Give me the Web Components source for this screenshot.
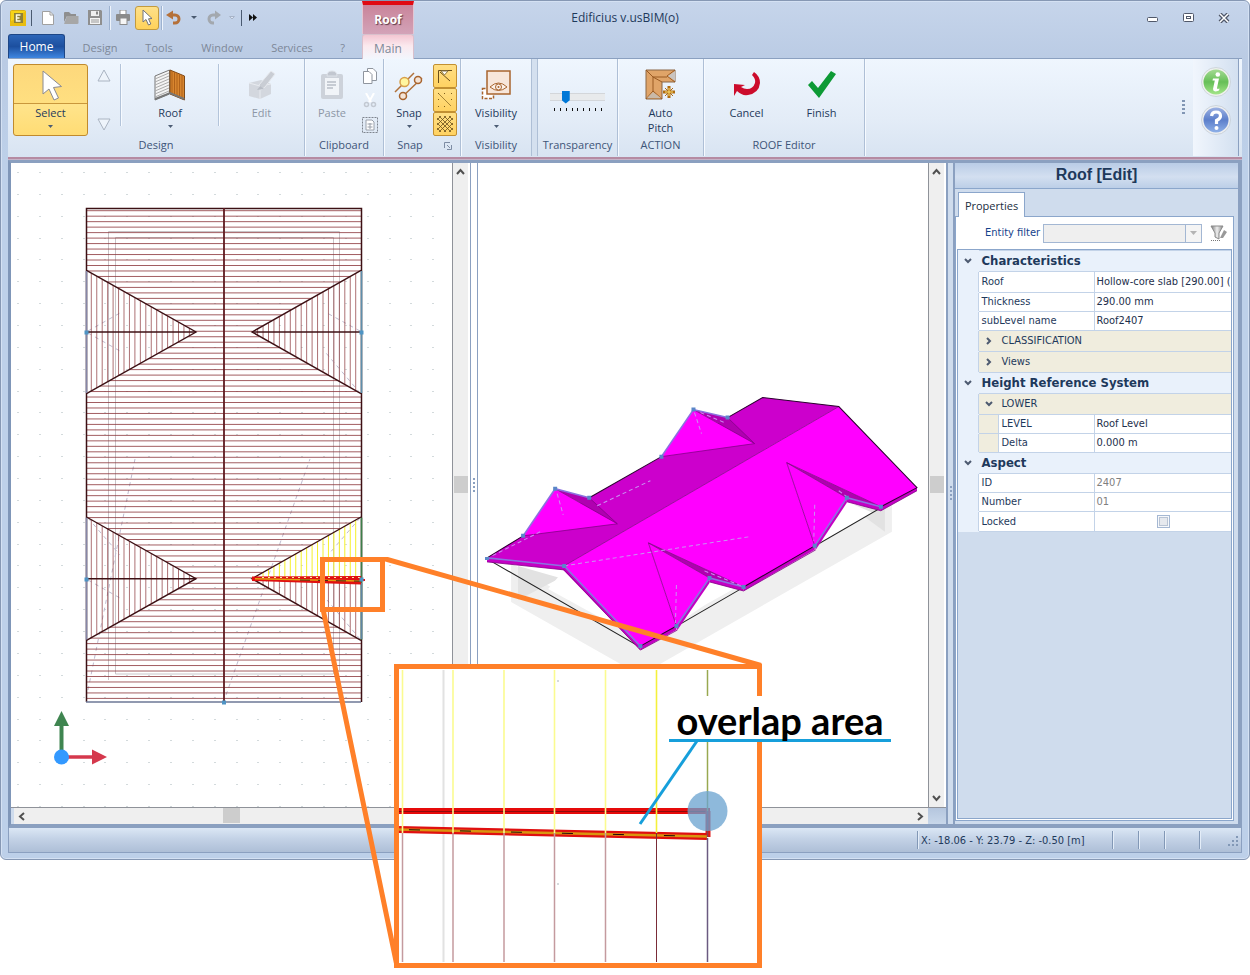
<!DOCTYPE html>
<html lang="en">
<head>
<meta charset="utf-8">
<title>Edificius v.usBIM(o)</title>
<style>
html,body{margin:0;background:#fff}
body{font:11px/16px "Open Sans","Noto Sans",sans-serif;color:#1e395b}
</style>
</head>
<body>
<app-window>
  <title-bar slot="title">Edificius v.usBIM(o)</title-bar>
  <tab-strip slot="tabs"></tab-strip>
  <ribbon-bar slot="ribbon"></ribbon-bar>
  <view-area slot="views"></view-area>
  <property-panel slot="panel">Roof [Edit]</property-panel>
  <status-bar slot="status">X: -18.06 - Y: 23.79 - Z: -0.50 [m]</status-bar>
  <detail-callout slot="overlay">overlap area</detail-callout>
</app-window>
<script>
const base = '<style>:host,*{box-sizing:border-box}button{font:inherit;color:inherit;background:none;border:0;padding:0;margin:0}svg{display:block}</style>';
function define(name, html, setup) {
  const t = document.createElement('template');
  t.innerHTML = base + html;
  customElements.define(name, class extends HTMLElement {
    constructor() {
      super();
      this.attachShadow({mode: 'open'}).append(t.content.cloneNode(true));
      if (setup) setup(this.shadowRoot, this);
    }
  });
}

/* ---------- window frame ---------- */
define('app-window', `
<style>
:host{display:block;position:relative;padding-bottom:115px}
.frame{border:1px solid #8698b4;border-radius:6px;background:linear-gradient(#c6d5eb,#bacbe4 60px,#bdd0e9 160px,#bdd0e9);padding:0 7px 6px;box-shadow:inset 0 0 0 1px #d4e1f3}
.work{display:flex;border:solid #8ba0c0;border-width:3px 3px 4px;border-left-color:#7f96b8;background:#cfdced}
.left{flex:1;min-width:0}
.right{flex:none;width:293px}
</style>
<div class="frame">
  <slot name="title"></slot><slot name="tabs"></slot><slot name="ribbon"></slot>
  <div class="work"><div class="left"><slot name="views"></slot></div><div class="right"><slot name="panel"></slot></div></div>
  <slot name="status"></slot>
</div>
<slot name="overlay"></slot>`);

/* ---------- title bar ---------- */
define('title-bar', `
<style>
:host{display:grid;grid-template-columns:1fr auto 1fr;height:33px}
.left{display:flex}
.qat{flex:none;width:354px;display:flex;align-items:center}
.qat button{height:24px;flex:none;display:flex;align-items:center;justify-content:center}
.on{background:linear-gradient(#fde08a,#ffd25a);border:1px solid #c29a3e;border-radius:3px}
.bar{flex:none;width:1px;height:16px;background:#4a5a70}
.sep{flex:none;width:2px;height:24px;background:linear-gradient(90deg,#9db2d0 50%,#eef4fc 50%)}
.ctx{flex:none;width:52px;border-top:4px solid #e00a12;background:linear-gradient(#c9849a,#d3a3b8);border-left:1px solid #e3c6d3;border-right:1px solid #e3c6d3;color:#fff;font-weight:700;font-size:12px;display:flex;align-items:center;justify-content:center;text-shadow:1px 1px 1px #5d3a48}
.title{align-self:center;font-size:12px}
.win{display:flex;justify-content:flex-end;align-items:center}
.win button{width:36px;height:20px;display:flex;align-items:center;justify-content:center}
</style>
<div class="left">
 <div class="qat">
  <button style="width:20px" aria-label="Application"><svg width="16" height="16"><rect x=".5" y=".5" width="15" height="15" rx="1" fill="#f7d417" stroke="#d8b01a"/><path d="M0 16V12L16 1V16Z" fill="#e9bd10"/><rect x="4" y="3" width="9" height="10" fill="#8d8038"/><path d="M10.500 5H6.500V11H10.500M6.500 8H9.500" stroke="#fffbe0" stroke-width="1.500" fill="none"/></svg></button>
  <span class="bar" style="margin:0 5px 0 3px"></span>
  <button style="width:21px" aria-label="New"><svg width="12" height="14"><path d="M.5.5H8L11.500 4V13.500H.5Z" fill="#fff" stroke="#a0a0a0"/><path d="M8 .5V4H11.500" fill="none" stroke="#a0a0a0"/></svg></button>
  <button style="width:25px" aria-label="Open"><svg width="16" height="14"><path d="M1 2Q1 1 2 1H6L8 3H13V5H4L1 11Z" fill="#8e8e8e"/><path d="M4 5H15.500V12Q15.500 13 14 13H1Z" fill="#a7a7a7"/></svg></button>
  <button style="width:24px" aria-label="Save"><svg width="14" height="15"><path d="M0 0H13L14 1V15H0Z" fill="#8f8f8f"/><rect x="3" y="1" width="8" height="5" fill="#f0f0f0"/><rect x="8" y="1.500" width="2" height="3" fill="#888"/><rect x="2" y="8" width="10" height="6" fill="#f4f4f4"/><path d="M3 10H11M3 12H11" stroke="#999"/></svg></button>
  <span class="sep" style="margin-left:2px"></span>
  <button style="width:24px" aria-label="Print"><svg width="14" height="15"><rect x="4" y="0" width="6" height="5" fill="#fff" stroke="#8b8b8b"/><rect y="4" width="14" height="7" rx="1" fill="#8b8b8b"/><rect x="4" y="8" width="7" height="6.500" fill="#f6f6f6" stroke="#8b8b8b"/></svg></button>
  <button class="on" style="width:24px" aria-label="Select"><svg width="12" height="17"><path d="M2 1V13L5 10.500L7.500 16L9.800 15L7.500 9.800L11 9.500Z" fill="#fff" stroke="#70737c"/></svg></button>
  <span class="sep" style="margin:0 2px"></span>
  <button style="width:18px" aria-label="Undo"><svg width="16" height="15"><path d="M3 5H9A4 4 0 0 1 9 13H7" fill="none" stroke="#b5713a" stroke-width="3"/><path d="M0 5L7 .5V9.500Z" fill="#b5713a"/></svg></button>
  <button style="width:22px" aria-label="Undo list"><svg width="6" height="3"><path d="M0 0H6L3 3Z" fill="#4a5a70"/></svg></button>
  <button style="width:18px" aria-label="Redo"><svg width="16" height="15"><path d="M12 5H7A4 4 0 0 0 7 13H8" fill="none" stroke="#a3a8ae" stroke-width="3"/><path d="M15 5L9 .5V9.500Z" fill="#a3a8ae"/></svg></button>
  <button style="width:18px" aria-label="Redo list"><svg width="6" height="4"><path d="M.5 .5H5.500L3 3Z" fill="#dbe5f3" stroke="#a8b4c8"/></svg></button>
  <span class="bar"></span>
  <button style="width:22px" aria-label="More"><svg width="8" height="7"><path d="M0 0L4 3.500L0 7ZM4 0L8 3.500L4 7Z" fill="#111"/></svg></button>
 </div>
 <div class="ctx">Roof</div>
</div>
<div class="title"><slot></slot></div>
<div class="win">
 <button aria-label="Minimize"><svg width="11" height="8"><rect x=".5" y="3.500" width="10" height="4" rx="1" fill="#fff" stroke="#50586a"/></svg></button>
 <button aria-label="Maximize"><svg width="11" height="9"><rect x=".5" y=".5" width="10" height="8" rx="1" fill="#fff" stroke="#50586a"/><rect x="3.500" y="3.500" width="4" height="2" fill="#fff" stroke="#50586a"/></svg></button>
 <button aria-label="Close"><svg width="12" height="10"><path d="M2 1L10 9M10 1L2 9" stroke="#50586a" stroke-width="4"/><path d="M2 1L10 9M10 1L2 9" stroke="#fff" stroke-width="1.500"/></svg></button>
</div>`);

/* ---------- tabs ---------- */
define('tab-strip', `
<style>
:host{display:flex;height:25px;border-bottom:1px solid #8ba0c0;color:#7d8898}
button{flex:none;height:24px;padding-top:3px}
.home{width:57px;background:linear-gradient(#2d66b8,#1c4f9f 50%,#3f86e0);color:#fff;border:1px solid #1d4686;border-bottom:0;border-radius:3px 3px 0 0;padding-top:0;font-size:12px}
.main{width:52px;height:25px;background:linear-gradient(#f3c6d2,#fbe9ee 45%,#f2f6fd);border:1px solid #d9c0cc;border-bottom:0;border-radius:3px 3px 0 0;font-size:12px}
</style>
<button class="home">Home</button><button style="width:70px">Design</button><button style="width:48px">Tools</button><button style="width:78px">Window</button><button style="width:62px">Services</button><button style="width:39px">?</button><button class="main">Main</button>`);

/* ---------- ribbon parts ---------- */
define('ribbon-group', `
<style>
:host{display:flex;flex-direction:column;flex:none;border-right:1px solid #aebfd6;box-shadow:1px 0 #f6faff}
.body{flex:1;display:flex;position:relative}
.cap{height:20px;line-height:18px;text-align:center;color:#3e5578;font-size:11px;white-space:nowrap;position:relative}
.short{padding-right:24px}
svg{position:absolute;right:8px;top:6px}
</style>
<div class="body"><slot></slot></div><div class="cap"><span></span></div>`, (r, el) => {
  r.querySelector('span').textContent = el.getAttribute('label');
  if (el.hasAttribute('launcher')) {
    r.querySelector('.cap').classList.add('short');
    r.querySelector('.cap').insertAdjacentHTML('beforeend',
     '<svg width="8" height="8"><path d="M.5 6V.5H6M3 3L6 6M7.500 3V7.500H3" fill="none" stroke="#7d8ca3"/></svg>');
  }
});
define('ribbon-button', `
<style>
:host{display:block;flex:none}
button{width:100%;height:72px;margin-top:5px;display:flex;flex-direction:column;align-items:center;border:1px solid transparent}
.pic{height:39px;width:100%;display:flex;align-items:center;justify-content:center}
.txt{line-height:15px;padding-top:1px}
:host([on]) button{border-color:#c08a2e;border-radius:3px;background:linear-gradient(#fdd87c,#ffdf80 38px,#c9973c 38px,#c9973c 39px,#ffe48c 39px,#ffdc74)}
:host([off]){color:#8d97a6}
.arr{display:none;margin-top:5px}
:host([menu]) .arr{display:block}
</style>
<button><span class="pic"><slot name="icon"></slot></span><span class="txt"><slot></slot></span><svg class="arr" width="5" height="3"><path d="M0 0H5L2.500 3Z" fill="#4c5c74"/></svg></button>`,
 (r, el) => { if (el.hasAttribute('off')) r.querySelector('button').disabled = true; r.querySelector('button').style.color = 'inherit'; });

define('ribbon-bar', `
<style>
:host{display:flex;height:101px;background:linear-gradient(#eff6fe,#e3ecf7 60%,#d7e3f1);box-shadow:inset 0 -1px #c6b4c8,inset 0 -3px #b58ba2;padding-bottom:4px}
.sep{flex:none;width:2px;height:62px;margin-top:5px;background:linear-gradient(90deg,#b3c4da 50%,#f6faff 50%)}
.spin{flex:none;width:32px;display:flex;flex-direction:column;justify-content:space-between;align-items:center;height:62px;margin-top:10px}
.mini{flex:none;width:22px;display:flex;flex-direction:column;gap:9px;padding-top:9px;align-items:center}
.tog{flex:none;width:24px;padding-top:5px}
.tog button{width:24px;height:24px;border:1px solid #c29032;border-radius:2px;background:linear-gradient(#ffdf85,#ffd262);display:flex;align-items:center;justify-content:center}
.gap{flex:none;width:6px;border-right:1px solid #aebfd6;background:#d4e0ef}
.slide{display:flex;flex-direction:column;align-items:center;padding-top:31px;width:100%}
input{appearance:none;-webkit-appearance:none;width:55px;height:14px;margin:0;background:linear-gradient(transparent 3px,#d3d6da 3px,#d3d6da 4px,#e8eaec 4px,#e8eaec 10px,#d3d6da 10px,#d3d6da 11px,transparent 11px)}
input::-webkit-slider-thumb{-webkit-appearance:none;width:8px;height:13px;background:#0078d7;clip-path:polygon(0 0,100% 0,100% 75%,50% 100%,0 75%)}
.slide svg{margin-top:4px}
.fill{flex:1}
.dots{align-self:center;width:3px;height:15px;margin-right:8px;background:repeating-linear-gradient(#8196b4 0 2px,transparent 2px 4px)}
.help{flex:none;width:46px;margin-right:3px;border-right:1px solid #8ba0c0;background:linear-gradient(90deg,#f1f6fd,#d3e0f0);display:flex;flex-direction:column;align-items:center;gap:8px;padding-top:8px}
.help button{height:30px}
</style>
<ribbon-group label="Design" style="width:297px">
  <ribbon-button on menu style="width:75px;margin-left:5px"><svg slot="icon" width="24" height="32"><path d="M4 2V25L10 20L15 31L19.500 29L14.500 18.500L22.500 17.500Z" fill="#fff" stroke="#8a8a92"/></svg>Select</ribbon-button>
  <div class="spin"><svg width="14" height="13"><path d="M7 1L13 12H1Z" fill="#eef4fb" stroke="#aab4c2"/></svg><svg width="14" height="13"><path d="M7 12L13 1H1Z" fill="#eef4fb" stroke="#aab4c2"/></svg></div>
  <span class="sep"></span>
  <ribbon-button menu style="width:96px"><svg slot="icon" width="32" height="32"><path d="M1 7L15.500 1V25L1 31Z" fill="#f4f4f4" stroke="#777"/><path d="M1 10L15 4M1 13L15 7M1 16L15 10M1 19L15 13M1 22L15 16M1 25L15 19M1 28L15 22" stroke="#aaa"/><path d="M16 1L30.500 7V31L16 25Z" fill="#d8862f" stroke="#7f4a18"/><path d="M18 2V25M20.500 3V26M23 4V27M25.500 5V28M28 6V29" stroke="#b0621a"/><path d="M1 31V29L16 23L30.500 29V31L16 25Z" fill="#777"/></svg>Roof</ribbon-button>
  <span class="sep"></span>
  <ribbon-button off style="width:83px"><svg slot="icon" width="30" height="32"><path d="M2 14L14 11L24 15V25L13 30L2 27Z" fill="#d3d7de"/><path d="M2 14L13 17L24 15M13 17V30" stroke="#e8ebf0" fill="none"/><path d="M14 21L12 16L24 2L28 5L18 18Z" fill="#c9cdd4" stroke="#e6e9ee"/><path d="M10 21L13 17L17 20Z" fill="#b9bec6"/></svg>Edit</ribbon-button>
</ribbon-group>
<ribbon-group label="Clipboard" style="width:79px">
  <ribbon-button off style="width:54px"><svg slot="icon" width="24" height="30"><rect x="1" y="4" width="22" height="25" rx="2" fill="#cdd2da"/><path d="M7 6Q7 1 12 1Q17 1 17 6Z" fill="#c2c7d0" stroke="#dfe3ea"/><rect x="5" y="8" width="14" height="17" fill="#f1f4f8"/><path d="M7 12H16M7 15H16M7 18H13" stroke="#c6cbd3" stroke-width="2"/></svg>Paste</ribbon-button>
  <div class="mini">
   <button aria-label="Copy"><svg width="14" height="16"><path d="M4.500.5H10L13.500 4V12.500H4.500Z" fill="#fff" stroke="#8f959e"/><path d="M.5 3.500H6L9 6.500V15.500H.5Z" fill="#fff" stroke="#8f959e"/></svg></button>
   <button aria-label="Cut"><svg width="14" height="15"><path d="M3 0L8 9M11 0L6 9" stroke="#fff" stroke-width="2"/><circle cx="3.500" cy="11.500" r="2" fill="none" stroke="#c3c9d2" stroke-width="1.500"/><circle cx="10.500" cy="11.500" r="2" fill="none" stroke="#c3c9d2" stroke-width="1.500"/></svg></button>
   <button aria-label="Copy area"><svg width="16" height="16"><rect x=".5" y=".5" width="15" height="15" fill="none" stroke="#7f858e" stroke-dasharray="2 1"/><path d="M4 3H10L12 5V13H4Z" fill="#fff" stroke="#9aa0aa"/><path d="M5.500 7H10.500M5.500 10H10.500M8 6V12" stroke="#9aa0aa"/></svg></button>
  </div>
</ribbon-group>
<ribbon-group label="Snap" launcher style="width:77px">
  <ribbon-button menu style="width:48px;margin-left:1px"><svg slot="icon" width="30" height="32" fill="none"><path d="M1 23L20 4M8 28L28 9" stroke="#b0713a" stroke-width="1.500"/><circle cx="10.500" cy="13" r="4.500" fill="#fff6a0" stroke="#d8a04a" stroke-width="1.500"/><circle cx="24" cy="11" r="3.500" fill="#f5e4d6" stroke="#a8642e" stroke-width="1.500"/><circle cx="9" cy="27" r="3.500" fill="#f5e4d6" stroke="#a8642e" stroke-width="1.500"/></svg>Snap</ribbon-button>
  <div class="tog">
   <button aria-label="Snap angle"><svg width="16" height="16"><path d="M1.500 15V2.500H15M3 4L13 13" fill="none" stroke="#6b4f1a"/><path d="M4 3H11L7.500 7Z" fill="#fff" stroke="#8d7a48"/></svg></button>
   <button aria-label="Snap point"><svg width="16" height="16"><path d="M2 2L14 14" stroke="#80601c" stroke-width=".7"/><g fill="#80601c"><rect x="1" y="1" width="1" height="1"/><rect x="7" y="1" width="1" height="1"/><rect x="14" y="1" width="1" height="1"/><rect x="1" y="7" width="1" height="1"/><rect x="14" y="7" width="1" height="1"/><rect x="1" y="14" width="1" height="1"/><rect x="7" y="14" width="1" height="1"/></g></svg></button>
   <button aria-label="Snap grid"><svg width="16" height="16"><path d="M0 4L4 0M0 9L9 0M0 14L14 0M2 16L16 2M7 16L16 7M12 16L16 12M12 0L16 4M7 0L16 9M2 0L16 14M0 2L14 16M0 7L9 16M0 12L4 16" stroke="#6b4f1a" stroke-width=".8"/></svg></button>
  </div>
</ribbon-group>
<ribbon-group label="Visibility" style="width:71px">
  <ribbon-button menu style="width:70px"><svg slot="icon" width="30" height="30"><rect x="1.500" y="18.500" width="11" height="10" fill="#fff" stroke="#a8642e" stroke-dasharray="3 1.500" stroke-width="1.500"/><rect x="6" y="1" width="23" height="23" fill="#f7e6da" stroke="#a8642e" stroke-width="1.500"/><path d="M9 17Q17.500 9 26 17Q17.500 24 9 17Z" fill="#fbf0e8" stroke="#a8642e"/><circle cx="17.500" cy="17" r="3" fill="none" stroke="#a8642e"/><circle cx="17.500" cy="17" r="1" fill="#a8642e"/></svg>Visibility</ribbon-button>
</ribbon-group>
<div class="gap"></div>
<ribbon-group label="Transparency" style="width:80px">
  <div class="slide"><input type="range" min="0" max="8" value="2" aria-label="Transparency"><svg width="48" height="4"><path d="M.5 0V3M6.500 0V3M12.500 0V3M18.500 0V3M23.500 0V3M29.500 0V3M35.500 0V3M41.500 0V3M47.500 0V3" stroke="#111"/></svg></div>
</ribbon-group>
<ribbon-group label="ACTION" style="width:86px">
  <ribbon-button style="width:85px"><svg slot="icon" width="32" height="32"><path d="M1 1H30V13H17V30H1Z" fill="#e0a468" stroke="#8a6644"/><path d="M1 1L8 8M30 1L22 7L30 13M8 8H22M8 8V22L1 30M8 22L17 30M8 8L17 13" fill="none" stroke="#9a5a22"/><path d="M30 2V12L23 7Z" fill="#c9c4c0"/><path d="M2 29L8 23L16 29Z" fill="#c9b9a8"/><path d="M24 17V29M18 23H30" stroke="#b06c10" stroke-width="3"/><path d="M20 19L28 27M28 19L20 27" stroke="#b06c10"/><path d="M24 19V27M20 23H28" stroke="#ffe070"/></svg>Auto<br>Pitch</ribbon-button>
</ribbon-group>
<ribbon-group label="ROOF Editor" style="width:161px">
  <ribbon-button style="width:75px;margin-left:5px"><svg slot="icon" width="30" height="27"><path d="M20 4Q24 8 23 12Q21 18 15 18Q12 18 9 16L13 14L2 13V25L5 20Q10 25 16 24Q27 22 28 12Q28 5 22 1Z" fill="#cc0c2c"/></svg>Cancel</ribbon-button>
  <ribbon-button style="width:75px"><svg slot="icon" width="30" height="30"><path d="M1 15L5 11L11 18L24 1L29 4L12 28Z" fill="#0d9a35"/></svg>Finish</ribbon-button>
</ribbon-group>
<div class="fill"></div>
<div class="dots"></div>
<div class="help">
 <button aria-label="Information"><svg width="30" height="30"><defs><linearGradient id="g" x2="0" y2="1"><stop stop-color="#a9dd98"/><stop offset=".5" stop-color="#66bf57"/><stop offset="1" stop-color="#a8e88c"/></linearGradient></defs><circle cx="15" cy="15" r="13.500" fill="url(#g)" stroke="#eef0ee" stroke-width="2"/><circle cx="15" cy="15" r="14.500" fill="none" stroke="#bcc6cc" stroke-width=".6"/><circle cx="16.800" cy="7.500" r="2.300" fill="#fff"/><path d="M12 11.500H18L16 21Q16 22.500 18.500 21.500L18 23.500Q12 26 12 22L13.800 13.500H11.500Z" fill="#fff"/></svg></button>
 <button aria-label="Help"><svg width="30" height="30"><defs><linearGradient id="b" x2="0" y2="1"><stop stop-color="#a0b4e4"/><stop offset=".5" stop-color="#5c7fcb"/><stop offset="1" stop-color="#92b4ea"/></linearGradient></defs><circle cx="15" cy="15" r="13.500" fill="url(#b)" stroke="#eceef0" stroke-width="2"/><circle cx="15" cy="15" r="14.500" fill="none" stroke="#b8c2cc" stroke-width=".6"/><path d="M10.500 11Q11 7 15 7Q19.500 7 19.500 11Q19.500 13.500 15.500 15.500V19" fill="none" stroke="#fff" stroke-width="3.200"/><circle cx="15.500" cy="23" r="2" fill="#fff"/></svg></button>
</div>`);

/* ---------- plan drawing ---------- */
define('plan-view', `
<style>:host{display:block;background:#fff;overflow:hidden}svg{width:100%;height:100%}</style>
<svg viewBox="11 163 441 644" preserveAspectRatio="xMinYMin slice" role="img" aria-label="Roof plan"></svg>`, r => {
  const L = (x1,y1,x2,y2,c,w=1,x='') => `<line x1="${x1.toFixed(2)}" y1="${y1.toFixed(2)}" x2="${x2.toFixed(2)}" y2="${y2.toFixed(2)}" stroke="${c}" stroke-width="${w}" ${x}/>`;
  let s = '<g fill="#d3dadc">';
  for (let y = 172; y < 806; y += 21.86) for (let x = 18; x < 440; x += 21.86) s += `<rect x="${Math.round(x)-1}" y="${Math.round(y)}" width="2" height="1"/>`;
  s += '</g>';
  const ghost = '#c9c4c8';
  s += `<path d="M108.500 680V231.500H339.500V670M115.500 674V237.500H333.500V674Z" fill="none" stroke="${ghost}"/>`;
  const d = 'stroke-dasharray="4 4"', lil = '#c0bcd0';
  s += L(88,690,135,459,lil,1,d)+L(226,695,310,459,lil,1,d);
  for (const [a,b,c,e] of [[88,331,120,313],[88,333,120,351],[360,331,327,313],[360,393,326,353],[88,518,120,555],[88,580,120,598],[360,518,328,555],[360,639,327,600]]) s += L(a,b,c,e,lil,1,d);
  const red = '#8a3438';
  for (let y = 210.7; y < 702; y += 5.48) {
    let cut = 0;
    for (const m of [332, 578.7]) { const k = Math.abs(y - m); if (k < 61.7) cut = 110 * (1 - k / 61.7); }
    s += L(86 + cut, y, 361 - cut, y, red, .8);
  }
  for (const m of [332, 578.7]) for (let i = 5.3; i < 108; i += 5.45) {
    const h = 61.7 * (1 - i / 110);
    s += L(86+i, m-h, 86+i, m+h, red, .7);
    if (m < 400) s += L(361-i, m-h, 361-i, m+h, red, .7);
    else s += L(361-i, m-h, 361-i, m, '#f5f02a', 1) + L(361-i, m, 361-i, m+h, red, .7);
  }
  const dk = '#3c1014';
  s += `<path d="M86.500 702V208.500H361.500V702" fill="none" stroke="${dk}" stroke-width="1.500"/>` + L(224,208,224,702,'#5e1a20',1.8);
  s += L(86,702,361,702,'#6c7796',1.5);
  for (const m of [332, 578.7]) {
    s += `<path d="M86.500 ${m-61.7}L196 ${m}L86.500 ${m+61.7}M361 ${m-61.7}L252 ${m}L361 ${m+61.7}" fill="none" stroke="${dk}" stroke-width="1.400"/>`;
    s += L(86,m,196,m,dk,1.5) + L(86.5,m-61,86.5,m+61,'#8587a8',1.6) + L(361.5,m-61,361.5,m+61,m>400?'#3d7f4a':'#5f8fac',1.6);
    if (m < 400) s += L(252,m,361,m,dk,1.5);
  }
  s += L(361.5,583,361.5,639,'#5f86a4',1.6);
  s += `<path d="M252 576.500L361 576V584.500L252 581Z" fill="#e01010"/><path d="M262 577.500H361" stroke="#ffe9a0" stroke-dasharray="2 4"/>` + L(255,578.8,361,581,'#e0a010',1.6) + L(300,580,361,581.2,'#201010',.8,'stroke-dasharray="10 8"') + L(361,580,365,580,'#e01010',2);
  for (const [x,y] of [[86,332],[361,332],[86,579],[361,579],[223.5,702]]) s += `<rect x="${x-1.5}" y="${y-1.5}" width="4" height="4" fill="#4f94c4"/>`;
  s += '<path d="M61.500 757V724" stroke="#3f8550" stroke-width="4"/><path d="M61.500 711L69 726H54Z" fill="#3f8550"/><path d="M61 757H93" stroke="#d5384c" stroke-width="3.500"/><path d="M107 757L92 749.500V764.500Z" fill="#d5384c"/><circle cx="61.500" cy="757" r="7.500" fill="#3399ff"/>';
  r.querySelector('svg').innerHTML = s;
});

/* ---------- 3D drawing ---------- */
define('model-view', `
<style>:host{display:block;background:#fff;overflow:hidden}svg{width:100%;height:100%}</style>
<svg viewBox="478 163 449 644" preserveAspectRatio="xMinYMin slice" role="img" aria-label="Roof model">
 <path d="M511 562V601L640 674L891 531V500L640 640Z" fill="#efefef"/>
 <path d="M518 565V599L560 577Z" fill="#e2e2e2"/><path d="M846 503L884 508V531Z" fill="#e2e2e2"/>
 <path d="M563 570L548 588L628 632Z" fill="#fff"/><path d="M681 620L709 581L727 588Z" fill="#fff"/><path d="M818 543L846 501L872 512Z" fill="#fff"/>
 <path d="M487 558L640 646L880 507" fill="none" stroke="#222"/>
 <g fill="#c400c4"><path d="M487 557L564 565V569L487 561Z"/><path d="M564 565L640 645V649L563 569Z"/><path d="M640 645L676 625V629L640 649Z"/><path d="M676 625L709 577V582L677 629Z"/><path d="M709 577L743 586V590L709 581Z"/><path d="M743 586L814 545V549L743 590Z"/><path d="M814 545L846 497V502L815 549Z"/><path d="M846 497L880 506V510L846 501Z"/><path d="M880 506L916 486V490L880 510Z"/></g>
 <path d="M487 557L523 535L589 497L661 456L727 417L762 397L838 406L564 565Z" fill="#cc00cc"/>
 <path d="M564 565L838 406L916 487L880 506L786 462L814 545L743 586L648 542L676 625L640 645Z" fill="#f0f"/>
 <g fill="#f0f"><path d="M555 488L523 535L617 523Z"/><path d="M693 409L661 456L754 443Z"/><path d="M648 542L676 625L709 577Z"/><path d="M786 462L814 545L846 497Z"/></g>
 <g fill="#b000b0"><path d="M555 488L589 497L617 523Z"/><path d="M693 409L727 417L754 443Z"/><path d="M648 542L709 577L743 586Z"/><path d="M786 462L846 497L880 506Z"/></g>
 <g fill="none" stroke="#86008a" stroke-width=".8"><path d="M564 565L838 406M555 488L617 523L523 535M589 497L617 523M693 409L754 443L661 456M727 417L754 443M676 625L648 542L743 586M648 542L709 577M814 545L786 462L880 506M786 462L846 497"/><path d="M487 561L564 569L640 649L677 629M709 581L743 590L815 549M846 501L880 510L916 490"/></g>
 <path d="M487 557L523 535M589 497L661 456M727 417L762 397L838 406L916 487L880 506M640 645L676 625M743 586L814 545" fill="none" stroke="#2a002e"/>
 <path d="M523 535L555 488L589 497M661 456L693 409L727 417M487 557L564 565L640 645M676 625L709 577L743 586M814 545L846 497L880 506" fill="none" stroke="#8b72e0" stroke-width="1.600"/>
 <path d="M564 565L748 536M597 505L650 480M540 531L490 556M557 493L563 514M694 412L701 433M676 584L675 622M814 504L813 540M704 570L741 585M838 490L846 496M700 412L724 422" fill="none" stroke="#c990f0" stroke-dasharray="4 3"/>
 <g fill="#5a86c8"><path d="M485 556h4v3h-4zM562 563h4v4h-4zM638 643h4v4h-4zM674 623h4v4h-4zM707 575h4v4h-4zM741 584h4v4h-4zM812 543h4v4h-4zM844 495h4v4h-4zM878 504h4v4h-4zM553 486h4v4h-4zM587 495h4v4h-4zM521 533h4v4h-4zM691 407h4v4h-4zM725 415h4v4h-4zM659 454h4v4h-4z"/></g>
</svg>`);

/* ---------- scroll bars and view area ---------- */
define('scroll-bar', `
<style>
:host{display:flex;flex:none;justify-content:space-between;align-items:center;background:#efefef;position:relative}
:host([dir=v]){flex-direction:column;width:18px;border-left:1px solid #8f9299;border-right:2px solid #fff;padding:4px 0}
:host([dir=h]){height:16px;padding:0 4px}
i{position:absolute;background:#cdcdcd}
:host([dir=v]) i{left:1px;width:14px;height:17px;top:313px}
:host([dir=h]) i{top:0;width:17px;height:15px;left:209px}
svg{fill:none;stroke:#505050;stroke-width:2}
</style><svg width="9" height="9"><path/></svg><i></i><svg width="9" height="9"><path/></svg>`, (r, el) => {
  const p = r.querySelectorAll('path'), v = el.getAttribute('dir') === 'v';
  p[0].setAttribute('d', v ? 'M1 7L4.500 3L8 7' : 'M6 1L2 4.500L6 8');
  p[1].setAttribute('d', v ? 'M1 2L4.500 6L8 2' : 'M3 1L7 4.500L3 8');
});
define('view-area', `
<style>
:host{display:block}
.row{display:flex;height:644px}
plan-view{flex:none;width:441px}
model-view{flex:1;min-width:0}
.grip{flex:none;width:8px;background:#fff;border:solid #8ba0c0;border-width:0 1px;display:flex;align-items:center;justify-content:center}
.grip i{width:2px;height:15px;background:repeating-linear-gradient(#8ba0c0 0 2px,transparent 2px 4px)}
.foot{display:flex;border-top:1px solid #8f9299;height:17px;background:#efefef}
.pad{flex:none;width:3px;background:#cfdced}
scroll-bar[dir=h]{flex:1}
.end{flex:none;width:18px;background:linear-gradient(#b5c6de,#c8d7ea)}
</style>
<div class="row"><plan-view></plan-view><scroll-bar dir="v"></scroll-bar><div class="grip"><i></i></div><model-view></model-view><scroll-bar dir="v"></scroll-bar></div>
<div class="foot"><span class="pad"></span><scroll-bar dir="h"></scroll-bar><span class="end"></span></div>`);

/* ---------- property panel ---------- */
define('property-panel', `
<style>
:host{display:flex;height:100%;font-family:"DejaVu Sans Condensed","DejaVu Sans",sans-serif}
.split{flex:none;width:9px;border:solid #8ba0c0;border-width:0 2px;background:#cfdced;display:flex;align-items:center;justify-content:center}
.split i{width:2px;height:15px;background:repeating-linear-gradient(#8ba0c0 0 2px,transparent 2px 4px)}
.side{flex:1;display:flex;flex-direction:column;min-width:0;background:#cfdced;border-right:1px solid #8ba0c0}
h2{margin:0;height:26px;text-align:center;font:700 16px/24px "Liberation Sans",Arial,sans-serif;color:#1e395b;background:linear-gradient(#b9cce6,#d3dff0 55%,#bccee7);border-bottom:1px solid #8ba6cb}
.tabs{height:27px;padding:3px 3px 0;display:flex}
.tabs button{width:67px;height:25px;background:#fff;border:1px solid #8ba6cb;border-bottom:0;position:relative;color:#222d40;font:11px "Open Sans",sans-serif}
.page{flex:1;margin:0 4px 3px 0;border:1px solid #8ba6cb;background:#fff;display:flex;flex-direction:column}
.filter{height:32px;display:flex;align-items:center;padding-left:29px;gap:3px;color:#15428b}
select{width:159px;height:19px;margin:0;border:1px solid #a3b7d3;background:#efefef linear-gradient(90deg,transparent 141px,#a3b7d3 141px,#a3b7d3 142px,#f4f4f4 142px);appearance:none;border-radius:0;opacity:1}
.drop{position:relative;display:flex;margin-right:5px}
.drop svg{position:absolute;right:5px;top:7px}
.grid{flex:1;border:1px solid #8ba6cb;margin:0 1px 1px;background:#cfdced}
table{width:100%;table-layout:fixed;border-collapse:collapse;background:#fff}
td,th{border:1px solid #c3d3e8;padding:0 0 0 2px;height:19px;line-height:14px;text-align:left;font-weight:400;white-space:nowrap;overflow:hidden;color:#1e2f4c}
th{padding-left:3px;color:#1e395b}
tr>:last-child{border-right:0}
.g{background:#e9f1fb;border-left:0;border-top-color:#e9f1fb;border-bottom-color:#e9f1fb;padding:0}
.h th{font-weight:700;font-size:13px;background:#e9f1fb;border-left-color:#e9f1fb;border-right:0;height:21px}
.h .g{border-right-color:#e9f1fb}
.s td,.s th,.sg{background:#f0edde;height:21px}
.s .g{background:#e9f1fb}
.s .a{border-right-color:#f0edde}
.s th{border-left-color:#f0edde}
td.sg{border-top-color:#f0edde;height:19px}
.t td{height:21px}
.u td{height:20px}
.a svg{margin:0 auto}
.dim{color:#7f7f7f}
td.c{text-align:center}
input{appearance:none;-webkit-appearance:none;width:13px;height:13px;margin:0;vertical-align:middle;border:1px solid #a5b8d3;background:#e6e9ee;box-shadow:inset 0 0 0 1px #f6f8fb,inset 0 0 0 2px #b9c4d4}
</style>
<div class="split"><i></i></div>
<div class="side">
 <h2><slot></slot></h2>
 <div class="tabs"><button>Properties</button></div>
 <div class="page">
  <div class="filter"><label for="f">Entity filter</label><span class="drop"><select id="f" disabled></select><svg width="7" height="4"><path d="M0 0H7L3.500 4Z" fill="#b4b4b4"/></svg></span>
   <button aria-label="Filter"><svg width="18" height="17"><defs><linearGradient id="m"><stop stop-color="#777"/><stop offset=".5" stop-color="#eee"/><stop offset="1" stop-color="#888"/></linearGradient></defs><path d="M1 1H13L9 8V14L5 12V8Z" fill="url(#m)" stroke="#8a8a8a"/><path d="M10 13L14 5L17 7L13 13Z" fill="#999"/><path d="M1 15.500H10" stroke="#777" stroke-dasharray="1 1"/></svg></button></div>
  <div class="grid"><table aria-label="Roof properties"><colgroup><col style="width:20px"><col style="width:20px"><col style="width:96px"><col></colgroup><tbody></tbody></table></div>
 </div>
</div>`, r => {
  const dn = '<svg width="8" height="6"><path d="M1 1L4 4L7 1" fill="none" stroke="#4d5a70" stroke-width="2"/></svg>';
  const rt = '<svg width="6" height="8"><path d="M1 1L4 4L1 7" fill="none" stroke="#4d5a70" stroke-width="2"/></svg>';
  const head = t => `<tr class="h"><td class="g a">${dn}</td><th colspan="3">${t}</th></tr>`;
  const row = (t, v, c='', k='') => `<tr class="${k}"><td class="g"></td><th colspan="2">${t}</th><td class="${c}">${v}</td></tr>`;
  const sub = (t, i) => `<tr class="s"><td class="g"></td><td class="a">${i}</td><th colspan="2">${t}</th></tr>`;
  const deep = (t, v) => `<tr><td class="g"></td><td class="sg"></td><th>${t}</th><td>${v}</td></tr>`;
  r.querySelector('tbody').innerHTML = head('Characteristics') + row('Roof', 'Hollow-core slab [290.00] (', '', 't') + row('Thickness', '290.00 mm') + row('subLevel name', 'Roof2407')
   + sub('CLASSIFICATION', rt) + sub('Views', rt) + head('Height Reference System') + sub('LOWER', dn) + deep('LEVEL', 'Roof Level') + deep('Delta', '0.000 m')
   + head('Aspect') + row('ID', '2407', 'dim') + row('Number', '01', 'dim') + row('<label for="lock">Locked</label>', '<input id="lock" type="checkbox" disabled>', 'c', 'u');
});

/* ---------- status bar ---------- */
define('status-bar', `
<style>
:host{display:flex;justify-content:flex-end;height:25px;border:1px solid #8ba0c0;border-top:0;background:linear-gradient(#dbe7f5,#c3d2e6 45%,#aebfd7);font-family:"DejaVu Sans Condensed","DejaVu Sans",sans-serif}
span{flex:none;border-left:1px solid #8298b6;box-shadow:inset 1px 0 #e4edf8;margin:3px 0;line-height:19px;padding-left:3px}
svg{margin-top:5px}
</style>
<span style="width:195px"><slot></slot></span><span style="width:26px"></span><span style="width:26px"></span><span style="width:35px"></span>
<span style="width:42px;display:flex;justify-content:flex-end"><svg width="13" height="13" fill="#8298b6"><path d="M8 0h2v2h-2zM4 4h2v2h-2zM8 4h2v2h-2zM0 8h2v2h-2zM4 8h2v2h-2zM8 8h2v2h-2z"/></svg></span>`);

/* ---------- enlarged detail ---------- */
define('detail-callout', `
<style>
:host{position:absolute;left:320px;top:557px;width:575px;height:412px;pointer-events:none}
.label{position:absolute;left:349px;top:139px;width:222px;height:46px;background:#fff;border-bottom:3px solid #169fdb;color:#000;text-align:center;font:700 38px/48px Lato,"Open Sans",sans-serif;white-space:nowrap}
svg.b{position:absolute;left:0;top:0}
</style>
<svg class="b" width="575" height="412" viewBox="320 557 575 412"></svg>
<div class="label"><slot></slot></div>`, r => {
  let s = '<g fill="none" stroke="#ff8029" stroke-width="5"><rect x="322.500" y="559.500" width="60" height="50"/><path d="M384 558.500L761 665.500M323 609L397 966"/></g><rect x="396.500" y="666.500" width="363" height="299" fill="#fff" stroke="#ff8029" stroke-width="5"/>';
  s += '<path d="M443.500 670V962" stroke="#e2e2e2" stroke-width="2"/><g fill="#d5dadc"><rect x="557" y="680" width="2" height="2"/><rect x="557" y="883" width="2" height="2"/></g>';
  const xs = [402.5, 453, 504, 554.5, 605.5, 656.5];
  s += '<path d="M399 811H710" stroke="#e60a0a" stroke-width="6"/><path d="M399 811.500H707" stroke="#8c0c0c"/><path d="M708 811V837" stroke="#e01818" stroke-width="5"/>';
  s += '<path d="M399 829.500L707 836.500" stroke="#e01010" stroke-width="7"/><path d="M399 829.500L707 836.500" stroke="#d9960f" stroke-width="2.500"/><path d="M399 829.500L707 836.500" stroke="#1c0808" stroke-dasharray="11 40" stroke-dashoffset="-10"/>';
  xs.forEach((x, i) => {
    s += `<path d="M${x} 670V833" stroke="${i === 5 ? '#f4f03c' : '#fbfb90'}" stroke-width="1.600"/><path d="M${x} 833V962" stroke="${i === 5 ? '#7a2c38' : '#c49a9e'}" stroke-width="${i === 5 ? 1 : 1.5}"/>`;
  });
  s += '<path d="M707.500 670V811" stroke="#98a850" stroke-width="1.500"/><path d="M707.500 811V837" stroke="#8a4050" stroke-width="1.500"/><path d="M707.500 838V962" stroke="#6a5a80" stroke-width="1.500"/>';
  s += '<circle cx="707.500" cy="811" r="20" fill="#6aa3d0" fill-opacity=".76"/><path d="M697 741L640 824" stroke="#169fdb" stroke-width="3"/>';
  r.querySelector('svg').innerHTML = s;
});
</script>
</body>
</html>
